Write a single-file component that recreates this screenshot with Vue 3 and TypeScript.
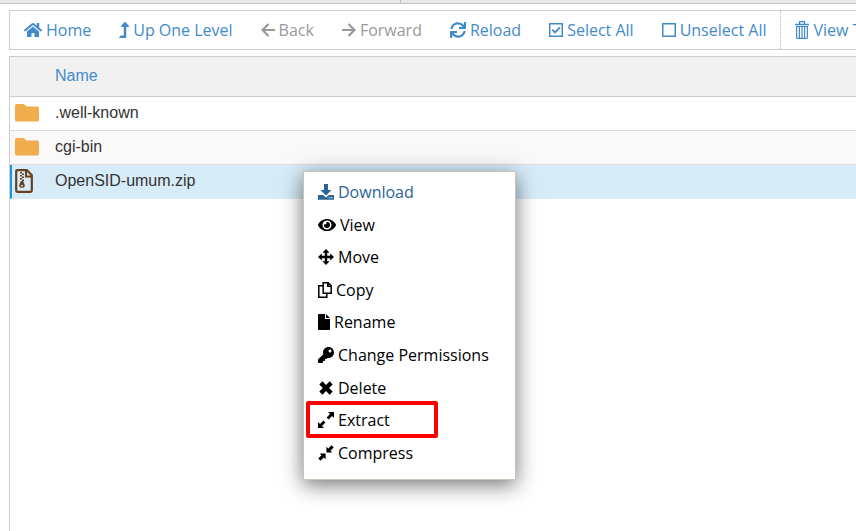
<script setup lang="ts">
import { ref } from 'vue'

interface Shape {
  d: string
  line?: number
  rule?: 'evenodd'
}

interface Icon {
  box: string
  width: number
  height: number
  shapes: Shape[]
}

interface Action {
  label: string
  icon: string
  disabled?: boolean
  divided?: boolean
}

interface FileEntry {
  name: string
  kind: 'folder' | 'zip'
}

const icons: Record<string, Icon> = {
  home: {
    box: '0 0 576 512', width: 18, height: 16,
    shapes: [{ d: 'M280.37 148.26L96 300.11V464a16 16 0 0 0 16 16l112.06-.29a16 16 0 0 0 15.92-16V368a16 16 0 0 1 16-16h64a16 16 0 0 1 16 16v95.64a16 16 0 0 0 16 16.05L464 480a16 16 0 0 0 16-16V300L295.67 148.26a12.19 12.19 0 0 0-15.3 0zM571.6 251.47L488 182.56V44.05a12 12 0 0 0-12-12h-56a12 12 0 0 0-12 12v72.61L318.47 43a48 48 0 0 0-61 0L4.34 251.47a12 12 0 0 0-1.6 16.9l25.5 31A12 12 0 0 0 45.15 301l235.22-193.74a12.19 12.19 0 0 1 15.3 0L530.9 301a12 12 0 0 0 16.9-1.6l25.5-31a12 12 0 0 0-1.7-16.93z' }],
  },
  up: {
    box: '0 0 320 512', width: 10, height: 16,
    shapes: [{ d: 'M313.553 119.669L209.587 7.666c-9.485-10.214-25.676-10.229-35.174 0L70.438 119.669C56.232 134.969 67.062 160 88.025 160H152v272H68.024a11.996 11.996 0 0 0-8.485 3.515l-56 56C-4.021 499.074 1.333 512 12.024 512H208c13.255 0 24-10.745 24-24V160h63.966c20.878 0 31.851-24.969 17.587-40.331z' }],
  },
  back: { box: '0 0 14 16', width: 14, height: 16, shapes: [{ d: 'M7.5 2l-6 6 6 6M1.500 8H14', line: 2.2 }] },
  forward: { box: '0 0 14 16', width: 14, height: 16, shapes: [{ d: 'M6.5 2l6 6-6 6M12.500 8H0', line: 2.2 }] },
  reload: {
    box: '0 0 512 512', width: 16, height: 16,
    shapes: [{ d: 'M440.65 12.57l4 82.77A247.16 247.16 0 0 0 255.83 8C134.73 8 33.91 94.92 12.29 209.82A12 12 0 0 0 24.09 224h49.05a12 12 0 0 0 11.67-9.26 175.91 175.91 0 0 1 317-56.94l-101.46-4.86a12 12 0 0 0-12.57 12v47.41a12 12 0 0 0 12 12H500a12 12 0 0 0 12-12V12a12 12 0 0 0-12-12h-47.37a12 12 0 0 0-11.98 12.57zM255.83 432a175.61 175.61 0 0 1-146-77.8l101.8 4.87a12 12 0 0 0 12.57-12v-47.4a12 12 0 0 0-12-12H12a12 12 0 0 0-12 12V500a12 12 0 0 0 12 12h47.35a12 12 0 0 0 12-12.6l-4.15-82.57A247.17 247.17 0 0 0 255.83 504c121.11 0 221.93-86.92 243.55-201.82a12 12 0 0 0-11.8-14.18h-49.05a12 12 0 0 0-11.67 9.26A175.86 175.86 0 0 1 255.83 432z' }],
  },
  checked: {
    box: '0 0 14 16', width: 14, height: 16,
    shapes: [{ d: 'M.75 1.75h12.5v12.5H.75z', line: 1.5 }, { d: 'M3.2 7.7l2.7 2.7 5-5', line: 1.8 }],
  },
  unchecked: { box: '0 0 14 16', width: 14, height: 16, shapes: [{ d: 'M.75 1.75h12.5v12.5H.75z', line: 1.5 }] },
  trash: {
    box: '0 0 14 18', width: 14, height: 18,
    shapes: [
      { d: 'M0 3.5h14M4.5 3V.6h5V3', line: 1.3 },
      { d: 'M1.6 5.5h10.8v10.8q0 1-1 1H2.6q-1 0-1-1zM4.4 6v11M7 6v11M9.6 6v11', line: 1.2 },
    ],
  },
  download: {
    box: '0 0 16 16', width: 16, height: 16,
    shapes: [{ d: 'M6 0h4v6h3.5L8 11.5 2.5 6H6zM0 11h5l3 2.4L11 11h5v4.8H0zM10.8 13.2v1h1.4v-1zM13.2 13.2v1h1.4v-1z', rule: 'evenodd' }],
  },
  view: {
    box: '0 0 576 512', width: 18, height: 16,
    shapes: [{ d: 'M572.52 241.4C518.29 135.59 410.93 64 288 64S57.68 135.64 3.48 241.41a32.35 32.35 0 0 0 0 29.19C57.71 376.41 165.07 448 288 448s230.32-71.64 284.52-177.41a32.35 32.35 0 0 0 0-29.19zM288 400a144 144 0 1 1 144-144 143.93 143.93 0 0 1-144 144zm0-240a95.31 95.31 0 0 0-25.31 3.79 47.85 47.85 0 0 1-66.9 66.9A95.78 95.78 0 1 0 288 160z' }],
  },
  move: {
    box: '0 0 16 16', width: 16, height: 16,
    shapes: [{ d: 'M8 0l3.6 3.8H9.2v3h3V4.4L16 8l-3.8 3.6V9.200h-3v3h2.400L8 16l-3.600-3.800h2.400v-3h-3v2.400L0 8l3.800-3.600v2.400h3v-3H4.400z' }],
  },
  copy: {
    box: '0 0 14 16', width: 14, height: 16,
    shapes: [
      { d: 'M5.2.8h5l3 3v7.4h-8zM9.8 1v3.2H13', line: 1.5 },
      { d: 'M5 3.8H.8v11.4h8v-3.8', line: 1.5 },
    ],
  },
  rename: {
    box: '0 0 12 16', width: 12, height: 16,
    shapes: [{ d: 'M0 .8Q0 0 .8 0H7v5h5v10.2q0 .8-.8.8H.8q-.8 0-.8-.8zM8 0l4 4H8z' }],
  },
  key: {
    box: '0 0 512 512', width: 16, height: 16,
    shapes: [{ d: 'M512 176.001C512 273.203 433.202 352 336 352c-11.22 0-22.19-1.062-32.827-3.069l-24.012 27.014A23.999 23.999 0 0 1 261.223 384H224v40c0 13.255-10.745 24-24 24h-40v40c0 13.255-10.745 24-24 24H24c-13.255 0-24-10.745-24-24v-78.059c0-6.365 2.529-12.47 7.029-16.971l161.802-161.802C163.108 213.814 160 195.271 160 176 160 78.798 238.797.001 335.999 0 433.488-.001 512 78.511 512 176.001zM336 128c0 26.51 21.49 48 48 48s48-21.49 48-48-21.49-48-48-48-48 21.49-48 48z' }],
  },
  remove: {
    box: '0 0 16 16', width: 16, height: 16,
    shapes: [{ d: 'M4.4 1.3L8 4.900l3.600-3.600 3.100 3.100L11.100 8l3.600 3.600-3.100 3.100L8 11.100l-3.600 3.600-3.100-3.100L4.900 8 1.300 4.400z' }],
  },
  extract: {
    box: '0 0 16 16', width: 16, height: 16,
    shapes: [{ d: 'M10 0h6v6l-2-2-3.4 3.4-2-2L12 2zM0 10l2 2 3.4-3.4 2 2L4 14l2 2H0z' }],
  },
  compress: {
    box: '0 0 16 16', width: 16, height: 16,
    shapes: [{ d: 'M13.500.3l2.200 2.200-3.200 3.200 1.800 1.900H8.400V1.700l1.900 1.800zM1.700 8.400h5.900v5.900l-1.900-1.800-3.200 3.200-2.200-2.200 3.200-3.200z' }],
  },
}

const toolbar: Action[] = [
  { label: 'Home', icon: 'home' },
  { label: 'Up One Level', icon: 'up' },
  { label: 'Back', icon: 'back', disabled: true },
  { label: 'Forward', icon: 'forward', disabled: true },
  { label: 'Reload', icon: 'reload' },
  { label: 'Select All', icon: 'checked' },
  { label: 'Unselect All', icon: 'unchecked' },
  { label: 'View Trash', icon: 'trash', divided: true },
]

const menu: Action[] = [
  { label: 'Download', icon: 'download' },
  { label: 'View', icon: 'view' },
  { label: 'Move', icon: 'move' },
  { label: 'Copy', icon: 'copy' },
  { label: 'Rename', icon: 'rename' },
  { label: 'Change Permissions', icon: 'key' },
  { label: 'Delete', icon: 'remove' },
  { label: 'Extract', icon: 'extract' },
  { label: 'Compress', icon: 'compress' },
]

const files: FileEntry[] = [
  { name: '.well-known', kind: 'folder' },
  { name: 'cgi-bin', kind: 'folder' },
  { name: 'OpenSID-umum.zip', kind: 'zip' },
]

const selected = ref('OpenSID-umum.zip')
const active = ref('Download')
const marked = ref('Extract')
</script>

<template>
  <div class="page">
    <div class="top-strip"><span class="strip-left"></span></div>

    <main class="manager">
      <nav class="toolbar">
        <button
          v-for="item in toolbar"
          :key="item.label"
          type="button"
          class="tool"
          :class="{ divided: item.divided }"
          :disabled="item.disabled"
        >
          <svg :viewBox="icons[item.icon].box" :width="icons[item.icon].width" :height="icons[item.icon].height" aria-hidden="true">
            <path
              v-for="(s, i) in icons[item.icon].shapes"
              :key="i"
              :d="s.d"
              :fill="s.line ? 'none' : 'currentColor'"
              :stroke="s.line ? 'currentColor' : 'none'"
              :stroke-width="s.line"
            />
          </svg>
          <span>{{ item.label }}</span>
        </button>
      </nav>

      <section class="listing">
        <table>
          <thead>
            <tr>
              <th class="icon-cell"></th>
              <th><a href="#name">Name</a></th>
            </tr>
          </thead>
          <tbody>
            <tr v-for="file in files" :key="file.name" :class="{ selected: file.name === selected }" @click="selected = file.name">
              <td class="icon-cell">
                <svg v-if="file.kind === 'folder'" class="folder" viewBox="0 0 24 18" width="24" height="18" aria-hidden="true">
                  <path d="M0 1.500Q0 0 1.500 0h7L12 2.500h10.500Q24 2.500 24 4v12q0 1.500-1.500 1.500h-21Q0 17.500 0 16z" fill="currentColor" />
                </svg>
                <svg v-else class="zip" viewBox="0 0 18 24" width="18" height="24" aria-hidden="true">
                  <path d="M2.200 1.200h9.600l5 5v15.600q0 1-1 1H2.200q-1 0-1-1V2.200q0-1 1-1z" fill="none" stroke="currentColor" stroke-width="2.200" />
                  <path d="M11 1v6.500h6" fill="none" stroke="currentColor" stroke-width="2" />
                  <path d="M5 3h2v1.500H5zM7 4.500h2V6H7zM5 6h2v1.500H5zM7 7.500h2V9H7zM5 9h2v1.500H5zM7 10.500h2V12H7z" fill="currentColor" />
                  <path d="M5.800 12h2.400l1.600 4.200a2.800 2.600 0 1 1-5.600 0zM6 16.200v1.300h2v-1.300z" fill="currentColor" fill-rule="evenodd" />
                </svg>
              </td>
              <td>{{ file.name }}</td>
            </tr>
          </tbody>
        </table>
      </section>
    </main>

    <ul class="menu">
      <li v-for="item in menu" :key="item.label" :class="{ marked: item.label === marked }">
        <button type="button" class="menu-item" :class="{ active: item.label === active }" @mouseenter="active = item.label">
          <svg :viewBox="icons[item.icon].box" :width="icons[item.icon].width" :height="icons[item.icon].height" aria-hidden="true">
            <path
              v-for="(s, i) in icons[item.icon].shapes"
              :key="i"
              :d="s.d"
              :fill="s.line ? 'none' : 'currentColor'"
              :fill-rule="s.rule"
              :stroke="s.line ? 'currentColor' : 'none'"
              :stroke-width="s.line"
            />
          </svg>
          <span>{{ item.label }}</span>
        </button>
      </li>
    </ul>
  </div>
</template>

<style>
body {
  background: #fff;
}
</style>

<style scoped>
.page {
  position: relative;
  display: flex;
  flex-direction: column;
  height: 100vh;
  overflow: hidden;
  font-family: "Open Sans", "Noto Sans", sans-serif;
  font-size: 16px;
  color: #333;
}

.top-strip {
  display: flex;
  flex: none;
  height: 3px;
  background: #e8e8e8;
  border-bottom: 1px solid #c4c4c4;
}

.strip-left {
  width: 400px;
  border-right: 1px dotted #aaa;
}

.manager {
  display: flex;
  flex: 1;
  flex-direction: column;
  gap: 6px;
  min-height: 0;
  padding: 6px 0 0 9px;
}

.toolbar {
  display: flex;
  flex: none;
  height: 38px;
  overflow: hidden;
  border: 1px solid #ccc;
  border-right: 0;
}

.tool,
.menu-item {
  display: flex;
  align-items: center;
  gap: 4px;
  margin: 0;
  border: 0;
  background: none;
  font: inherit;
  white-space: nowrap;
  cursor: pointer;
}

.tool {
  flex: none;
  padding: 0 14px;
  color: #428bca;
}

.tool:disabled {
  color: #999;
  cursor: default;
}

.tool.divided {
  border-left: 1px dotted #bbb;
}

svg {
  display: block;
  flex: none;
}

.listing {
  flex: 1;
  min-height: 0;
  overflow: hidden;
  border: 1px solid #ccc;
  border-width: 1px 0 0 1px;
  font-family: "Liberation Sans", Arial, sans-serif;
}

table {
  width: 100%;
  border-spacing: 0;
}

th,
td {
  box-sizing: border-box;
  height: 34px;
  padding: 0;
  border-bottom: 1px solid #ddd;
  text-align: left;
  font-weight: 400;
}

th {
  height: 40px;
  padding-bottom: 2px;
  border-color: #ccc;
  background: #f1f1f1;
}

tbody td {
  padding-bottom: 1px;
}

th a {
  color: #428bca;
  text-decoration: none;
}

.icon-cell {
  width: 45px;
  padding-left: 5px;
}

tbody tr:nth-child(even) td {
  background: #f9f9f9;
}

tbody tr.selected td {
  border-bottom-color: #d7ecf9;
  background: #d7ecf9;
}

tbody tr.selected .icon-cell {
  padding-left: 3px;
  border-left: 2px solid #179bd7;
}

.folder {
  color: #f0ad4e;
}

.zip {
  color: #68421b;
}

.menu {
  position: absolute;
  top: 171px;
  left: 303px;
  display: grid;
  grid-auto-rows: 1fr;
  box-sizing: border-box;
  width: 213px;
  height: 309px;
  margin: 0;
  padding: 4px 0 10px;
  border: 1px solid #c5c5b8;
  background: #fff;
  box-shadow: 0 5px 20px rgba(0, 0, 0, 0.55);
  list-style: none;
}

.menu li {
  position: relative;
  display: flex;
}

.menu-item {
  flex: 1;
  padding: 0 14px;
  color: #000;
}

.menu-item.active {
  color: #2a6496;
}

.marked::after {
  content: "";
  position: absolute;
  inset: -3px 77px -2px 2px;
  border: 4px solid #f00;
  border-radius: 2px;
  pointer-events: none;
}
</style>
